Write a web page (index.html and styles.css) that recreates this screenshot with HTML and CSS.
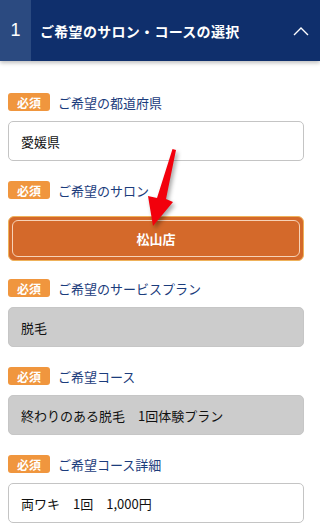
FILE: index.html
```html
<!DOCTYPE html>
<html lang="ja">
<head>
  <meta charset="UTF-8" />
  <meta name="viewport" content="width=device-width, initial-scale=1.0"/>
  <title>ご希望のサロン・コースの選択</title>
  <link rel="stylesheet" href="styles.css">
</head>
<body>

  <!-- Step header -->
  <div class="step-header">
    <div class="step-num">1</div>
    <div class="step-title">ご希望のサロン・コースの選択</div>
    <div class="step-toggle">
      <svg width="16" height="10" viewBox="0 0 16 10">
        <polyline points="1,9 8,2 15,9" fill="none" stroke="#ffffff" stroke-width="1.4"/>
      </svg>
    </div>
  </div>

  <div class="form">
    <div class="field">
      <div class="label"><span class="badge">必須</span>ご希望の都道府県</div>
      <div class="input">愛媛県</div>
    </div>

    <div class="field salon">
      <div class="label"><span class="badge">必須</span>ご希望のサロン</div>
      <div class="salon-btn"><div class="salon-inner">松山店</div></div>
    </div>

    <div class="field">
      <div class="label"><span class="badge">必須</span>ご希望のサービスプラン</div>
      <div class="input disabled">脱毛</div>
    </div>

    <div class="field">
      <div class="label"><span class="badge">必須</span>ご希望コース</div>
      <div class="input disabled">終わりのある脱毛　1回体験プラン</div>
    </div>

    <div class="field">
      <div class="label"><span class="badge">必須</span>ご希望コース詳細</div>
      <div class="input">両ワキ　1回　1,000円</div>
    </div>
  </div>

  <!-- annotation arrow -->
  <svg class="arrow" width="320" height="527" viewBox="0 0 320 527">
    <path d="M172.5,149 L176,150 L166,199 L173,202 L153,226 L148,196 L157,198 Z" fill="#f2000c"/>
  </svg>

</body>
</html>
```

FILE: styles.css
```css
body {
  margin: 0;
  font-family: "Noto Sans CJK JP", "Noto Sans", sans-serif;
  background-color: #ffffff;
  color: #222;
}

.step-header {
  display: flex;
  align-items: center;
  height: 61px;
  background-color: #0f2f6c;
  color: #ffffff;
  box-shadow: 0 2px 4px rgba(0,0,0,0.25);
}

.step-num {
  width: 31px;
  height: 100%;
  display: flex;
  align-items: center;
  justify-content: center;
  background-color: #2b4a80;
  font-family: "Liberation Sans", Arial, sans-serif;
  font-size: 18px;
}

.step-title {
  flex: 1;
  padding-left: 9px;
  font-size: 14px;
  font-weight: bold;
  letter-spacing: 0.3px;
}

.step-toggle {
  width: 30px;
  padding-right: 4px;
  display: flex;
  justify-content: center;
}

.form {
  padding: 32px 16px 0 8px;
}

.field {
  margin-bottom: 20px;
}

.field.salon {
  margin-bottom: 18px;
}

.label {
  display: flex;
  align-items: center;
  height: 18px;
  margin-bottom: 10px;
  font-size: 13px;
  color: #1b3c7c;
}

.badge {
  width: 42px;
  height: 18px;
  margin-right: 8px;
  border-radius: 3px;
  background-color: #f0963e;
  color: #ffffff;
  font-size: 12px;
  font-weight: bold;
  display: flex;
  align-items: center;
  justify-content: center;
}

.input {
  box-sizing: border-box;
  height: 40px;
  padding: 0 12px;
  display: flex;
  align-items: center;
  border: 1px solid #c4c4c4;
  border-radius: 5px;
  font-size: 13px;
  color: #111;
}

.input.disabled {
  background-color: #cccccc;
  border-color: #c6c6c6;
}

.salon-btn {
  box-sizing: border-box;
  height: 45px;
  padding: 3px;
  background-color: #d4692a;
  border: 1px solid #efb25a;
  border-radius: 6px;
  margin-top: 17px;
}

.salon-inner {
  box-sizing: border-box;
  height: 100%;
  display: flex;
  align-items: center;
  justify-content: center;
  border: 1px solid #f7d2b6;
  border-radius: 6px;
  color: #ffffff;
  font-size: 13px;
  font-weight: bold;
}

.arrow {
  position: absolute;
  left: 0;
  top: 0;
  pointer-events: none;
  filter: drop-shadow(2px 3px 2px rgba(0,0,0,0.35));
}
```
